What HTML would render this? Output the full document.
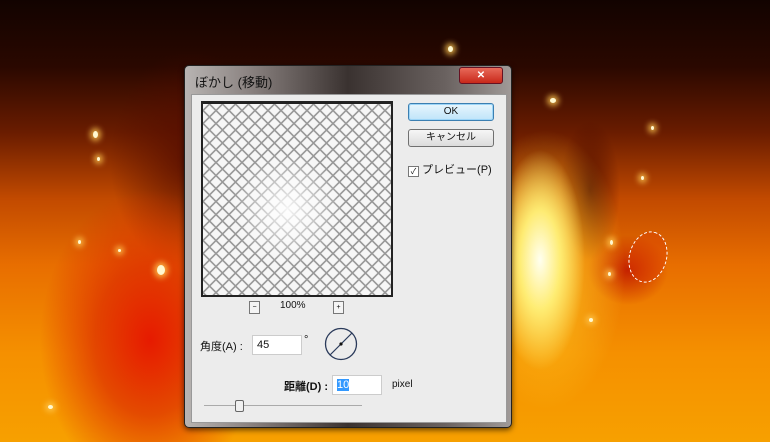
<!DOCTYPE html>
<html><head><meta charset="utf-8">
<style>
html,body{margin:0;padding:0}
body{width:770px;height:442px;overflow:hidden;position:relative;font-family:"Liberation Sans","Noto Sans CJK JP",sans-serif;
background:
radial-gradient(ellipse 45px 110px at 540px 260px, rgba(255,255,240,1) 0%, rgba(255,240,120,.95) 45%, rgba(255,170,0,0) 100%),
radial-gradient(ellipse 80px 140px at 545px 270px, rgba(255,210,40,.8) 0%, rgba(255,150,0,0) 100%),
radial-gradient(ellipse 110px 150px at 150px 340px, rgba(230,20,0,.95) 0%, rgba(220,40,0,.7) 50%, rgba(240,100,0,0) 100%),
radial-gradient(ellipse 40px 35px at 628px 270px, rgba(190,20,0,.85), rgba(190,20,0,0)),
radial-gradient(ellipse 30px 70px at 590px 190px, rgba(60,5,0,.7), rgba(60,5,0,0)),
radial-gradient(ellipse 80px 110px at 190px 160px, rgba(80,10,0,.8), rgba(80,10,0,0)),
linear-gradient(180deg,#120300 0%,#2a0800 15%,#6a1c00 30%,#c24a00 45%,#e86e00 60%,#f59000 80%,#f7a000 100%);}
.spark{position:absolute;background:#fff8d0;border-radius:50%;box-shadow:0 0 6px 3px rgba(255,200,80,.8)}
.dlg{position:absolute;left:184px;top:65px;width:326px;height:361px;background:linear-gradient(90deg,#b8b4b2 0%,#8a8280 20%,#3a3230 50%,#6a6260 80%,#a09a98 100%);border:1px solid #222;border-radius:5px;box-shadow:0 2px 6px rgba(0,0,0,.6)}
.title{position:absolute;left:10px;top:6px;font-size:13px;color:#111}
.close{position:absolute;right:8px;top:1px;width:42px;height:15px;background:linear-gradient(#e86a5a,#c8281a);border:1px solid #612;border-radius:3px;color:#fff;font-size:10px;text-align:center;line-height:15px;font-weight:bold}
.client{position:absolute;left:6px;top:28px;right:4px;bottom:4px;background:#ececec;border:1px solid #999}
.prev{position:absolute;left:9px;top:6px;width:188px;height:191px;border:2px solid #222;border-top-width:3px;background:#f6f6f6;overflow:hidden}
.btn{position:absolute;left:216px;width:84px;height:16px;border:1px solid #707070;border-radius:3px;background:linear-gradient(#f6f6f6,#dcdcdc);font-size:10px;text-align:center;line-height:16px;color:#111}
.ok{top:8px;border-color:#3c7fb1;background:linear-gradient(#e8f6fd,#bfe4f9);box-shadow:inset 0 0 0 1px #9dd5f7}
.lbl{position:absolute;font-size:11px;color:#111}
.inp{position:absolute;background:#fff;border:1px solid #ccc;font-size:11px;line-height:18px;padding-left:4px;color:#111}
.sm{position:absolute;width:9px;height:11px;border:1px solid #777;background:#f4f4f4;font-size:7px;text-align:center;line-height:11px}
</style></head><body>
<div class="spark" style="left:448px;top:46px;width:5px;height:6px"></div>
<div class="spark" style="left:550px;top:98px;width:6px;height:5px"></div>
<div class="spark" style="left:93px;top:131px;width:5px;height:7px"></div>
<div class="spark" style="left:97px;top:157px;width:3px;height:4px"></div>
<div class="spark" style="left:651px;top:126px;width:3px;height:4px"></div>
<div class="spark" style="left:641px;top:176px;width:3px;height:4px"></div>
<div class="spark" style="left:78px;top:240px;width:3px;height:4px"></div>
<div class="spark" style="left:118px;top:249px;width:3px;height:3px"></div>
<div class="spark" style="left:48px;top:405px;width:5px;height:4px"></div>
<div class="spark" style="left:157px;top:265px;width:8px;height:10px"></div>
<div class="spark" style="left:610px;top:240px;width:3px;height:5px"></div>
<div class="spark" style="left:608px;top:272px;width:3px;height:4px"></div>
<div class="spark" style="left:589px;top:318px;width:4px;height:4px"></div>
<div style="position:absolute;left:629px;top:231px;width:36px;height:50px;border:1px dashed #fff;border-radius:50%;transform:rotate(15deg);background:rgba(220,60,0,.4)"></div>
<div class="dlg">
<div class="title">ぼかし (移動)</div>
<div class="close">✕</div>
<div class="client">
<div class="prev">
<svg width="188" height="191"><defs><pattern id="p" width="13" height="13" patternUnits="userSpaceOnUse"><path d="M0 6.5L6.5 0L13 6.5L6.5 13Z" fill="none" stroke="#999" stroke-width="1.6"/></pattern>
<radialGradient id="g" cx="0.45" cy="0.55" r="0.3"><stop offset="0" stop-color="#fff" stop-opacity=".9"/><stop offset="1" stop-color="#fff" stop-opacity="0"/></radialGradient></defs>
<rect width="188" height="191" fill="url(#p)"/><rect width="188" height="191" fill="url(#g)"/></svg>
</div>
<div class="btn ok">OK</div>
<div class="btn" style="top:34px">キャンセル</div>
<div class="lbl" style="left:216px;top:66px;font-size:11px"><span style="display:inline-block;width:9px;height:9px;border:1px solid #777;background:#fff;font-size:8px;line-height:9px;text-align:center;vertical-align:-1px">✓</span> プレビュー(P)</div>
<div class="sm" style="left:57px;top:206px">−</div>
<div class="lbl" style="left:88px;top:205px;font-size:10px">100%</div>
<div class="sm" style="left:141px;top:206px">+</div>
<div class="lbl" style="left:8px;top:243px">角度(A) :</div>
<div class="inp" style="left:60px;top:240px;width:44px;height:18px">45</div>
<div class="lbl" style="left:112px;top:239px">°</div>
<svg style="position:absolute;left:132px;top:232px" width="34" height="34"><circle cx="17" cy="17" r="15.5" fill="none" stroke="#2a3a5a" stroke-width="1.3"/><line x1="6" y1="28" x2="28" y2="6" stroke="#2a3a5a" stroke-width="1.2"/><circle cx="17" cy="17" r="1.6" fill="#111"/></svg>
<div class="lbl" style="left:92px;top:283px;font-weight:bold">距離(D) :</div>
<div class="inp" style="left:140px;top:280px;width:44px;height:18px"><span style="background:#3399ff;color:#fff">10</span></div>
<div class="lbl" style="left:200px;top:284px;font-size:10px">pixel</div>
<div style="position:absolute;left:12px;top:310px;width:158px;height:1px;background:#aaa"></div>
<div style="position:absolute;left:43px;top:305px;width:7px;height:10px;border:1px solid #666;background:#f0f0f0;border-radius:2px"></div>
</div>
</div>
</body></html>
